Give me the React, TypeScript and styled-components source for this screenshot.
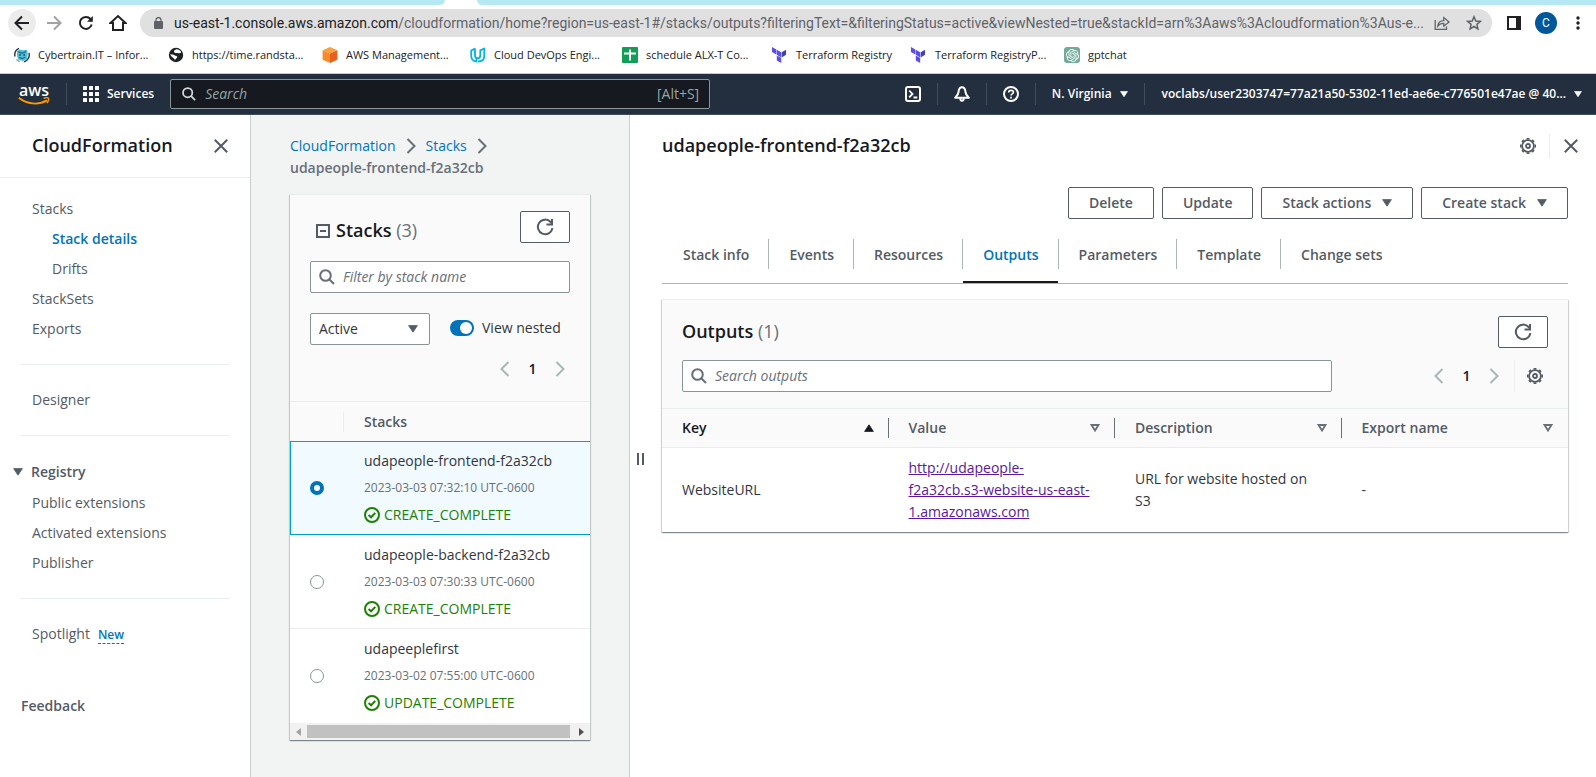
import React, { useState } from 'react';
import styled, { createGlobalStyle, css } from 'styled-components';
import { SiOpenai } from 'react-icons/si';

const c = {
  text: '#16191f',
  muted: '#545b64',
  soft: '#687078',
  line: '#eaeded',
  edge: '#c9cfcf',
  rule: '#aab7b8',
  field: '#879596',
  link: '#0073bb',
  ok: '#1d8102',
  nav: '#232f3e',
  head: '#fafafa',
};

const Global = createGlobalStyle`
  *, *::before, *::after { box-sizing: border-box; }
  body {
    margin: 0;
    background: #fff;
    color: ${c.text};
    font: 400 14px/22px "Open Sans", "Noto Sans", sans-serif;
  }
  button, input, select { font: inherit; color: inherit; }
  button { cursor: pointer; }
  a { text-decoration: none; }
  h1, h2, ul, ol { margin: 0; padding: 0; }
  ul, ol { list-style: none; }
  svg { display: block; flex: none; }
`;

const Page = styled.div`
  display: flex;
  flex-direction: column;
  min-height: 100vh;
`;

/* ---------- browser chrome ---------- */

const TabStrip = styled.div`
  display: flex;
  gap: 32px;
  height: 5px;
`;

const TabEdge = styled.div<{ $grow?: boolean }>`
  flex: ${(p) => (p.$grow ? '1 1 0' : '0 0 445px')};
  background: #b5e8f3;
  border-radius: ${(p) => (p.$grow ? '0 0 0 5px' : '0 0 5px 0')};
`;

const Toolbar = styled.div`
  display: flex;
  align-items: center;
  height: 36px;
  padding: 0 4px 0 8px;
`;

const ToolButtons = styled.div`
  display: flex;
  gap: 4px;
  margin-right: 8px;
`;

const ChromeButton = styled.button<{ $hover?: boolean }>`
  display: grid;
  place-items: center;
  width: 28px;
  height: 28px;
  padding: 0;
  border: 0;
  border-radius: 50%;
  background: ${(p) => (p.$hover ? '#ececec' : 'transparent')};
`;

const AddressBar = styled.div`
  display: flex;
  align-items: center;
  flex: 1;
  min-width: 0;
  height: 28px;
  padding: 0 4px 0 14px;
  border-radius: 14px;
  background: #e0e0e0;
`;

const Url = styled.div`
  flex: 1;
  min-width: 0;
  margin-left: 11px;
  overflow: hidden;
  white-space: nowrap;
  color: #5f6368;
  font: 400 14px/20px Roboto, sans-serif;
  b { font-weight: 400; color: #202124; }
`;

const AddressActions = styled.div`
  display: flex;
  gap: 4px;
`;

const ChromeMenu = styled.div`
  display: flex;
  align-items: center;
  gap: 7px;
  margin-left: 8px;
`;

const Avatar = styled.button`
  width: 22px;
  height: 22px;
  padding: 0;
  border: 0;
  border-radius: 50%;
  background: #01579b;
  color: #fff;
  font: 400 12px/22px Roboto, sans-serif;
`;

const Bookmarks = styled.nav`
  display: flex;
  align-items: center;
  height: 33px;
  padding: 0 14px 4px;
  border-bottom: 1px solid #c8cacd;
  font-size: 11px;
  line-height: 16px;
`;

const Bookmark = styled.a<{ $pitch: number }>`
  display: flex;
  align-items: center;
  gap: 8px;
  flex: 0 0 ${(p) => p.$pitch}px;
  color: #202124;
  white-space: nowrap;
`;

/* ---------- AWS navigation ---------- */

const AwsNav = styled.header`
  display: flex;
  align-items: center;
  height: 41px;
  padding: 0 14px 0 18px;
  border-bottom: 1px solid #414d5c;
  background: ${c.nav};
  color: #fff;
  font-size: 12px;
  font-weight: 600;
`;

const AwsLogo = styled.a`
  display: flex;
  flex-direction: column;
  align-items: center;
  width: 32px;
  color: #fff;
  font: 600 16px/13px "Open Sans", sans-serif;
`;

const NavRule = styled.i`
  width: 1px;
  height: 22px;
  background: #414d5c;
`;

const NavButton = styled.button<{ $pad?: string }>`
  display: flex;
  align-items: center;
  gap: 8px;
  padding: ${(p) => p.$pad ?? '0 16px'};
  border: 0;
  background: none;
  color: #fff;
  white-space: nowrap;
`;

const LogoCell = styled.div`
  display: flex;
  align-items: center;
  gap: 16px;
`;

const NavSearch = styled.label`
  display: flex;
  align-items: center;
  flex: 0 1 540px;
  gap: 9px;
  height: 30px;
  padding: 0 10px 0 11px;
  border: 1px solid ${c.field};
  border-radius: 2px;
  background: ${c.text};
  color: #95a5a6;
  font-size: 14px;
  font-weight: 400;
  svg { color: #d5dbdb; }
`;

const NavTools = styled.div`
  display: flex;
  align-items: center;
  margin-left: auto;
`;

const BareInput = styled.input<{ $tone?: string }>`
  flex: 1;
  min-width: 0;
  padding: 0;
  border: 0;
  outline: 0;
  background: transparent;
  &::placeholder {
    color: ${(p) => p.$tone ?? c.soft};
    font-style: italic;
    opacity: 1;
  }
`;

/* ---------- console layout ---------- */

const Console = styled.div`
  display: flex;
  flex: 1;
`;

const Sidebar = styled.aside`
  flex: 0 0 251px;
  border-right: 1px solid ${c.edge};
`;

const SidebarHeader = styled.div`
  display: flex;
  align-items: center;
  justify-content: space-between;
  height: 63px;
  padding: 0 19px 0 32px;
  border-bottom: 1px solid ${c.line};
`;

const Title = styled.h2`
  padding-bottom: 2px;
  font-size: 18px;
  line-height: 22px;
  font-weight: 600;
  span { color: ${c.soft}; font-weight: 400; }
`;

const IconButton = styled.button`
  display: grid;
  place-items: center;
  width: 20px;
  height: 24px;
  padding: 0;
  border: 0;
  background: none;
  color: ${c.muted};
`;

const SideNav = styled.nav`
  padding: 16px 20px 0;
`;

const SideGroup = styled.ul`
  & + & {
    margin-top: 20px;
    padding-top: 20px;
    border-top: 1px solid ${c.line};
  }
`;

const SideItem = styled.li<{ $nested?: boolean }>`
  padding: 4px 0 4px ${(p) => (p.$nested ? 32 : 12)}px;
`;

const SideLink = styled.a<{ $active?: boolean }>`
  color: ${(p) => (p.$active ? c.link : c.muted)};
  font-weight: ${(p) => (p.$active ? 600 : 400)};
`;

const SideToggle = styled.button`
  display: flex;
  align-items: center;
  gap: 8px;
  height: 32px;
  margin-left: -7px;
  padding: 0;
  border: 0;
  background: none;
  color: ${c.muted};
  font-weight: 600;
`;

const NewTag = styled.a`
  margin-left: 8px;
  border-bottom: 1px dashed ${c.link};
  color: ${c.link};
  font-size: 12px;
  line-height: 16px;
  font-weight: 600;
`;

const Feedback = styled.a`
  display: block;
  margin: 46px 0 20px 1px;
  color: ${c.muted};
  font-weight: 600;
`;

const StackColumn = styled.section`
  flex: 0 0 378px;
  padding: 20px 39px;
  background: #f2f3f3;
`;

const Crumbs = styled.ol`
  display: flex;
  flex-wrap: wrap;
  align-items: center;
  margin-bottom: 15px;
  color: ${c.soft};
  li { display: flex; align-items: center; }
  a { color: ${c.link}; }
  svg { margin: 0 10px; }
  strong { font-weight: 600; }
`;

const Panel = styled.section`
  border-top: 1px solid ${c.line};
  background: #fff;
  box-shadow:
    0 1px 1px 0 rgba(0, 28, 36, 0.3),
    1px 1px 1px 0 rgba(0, 28, 36, 0.15),
    -1px 1px 1px 0 rgba(0, 28, 36, 0.15);
`;

const PanelHeader = styled.div<{ $bottom: number }>`
  padding: 16px 20px ${(p) => p.$bottom}px;
  border-bottom: 1px solid ${c.line};
  background: ${c.head};
`;

const StackTitleRow = styled.div`
  display: flex;
  justify-content: space-between;
  height: 50px;
`;

const StackTitle = styled.div`
  display: flex;
  align-items: center;
  gap: 6px;
  height: 39px;
  padding-left: 6px;
`;

const Button = styled.button<{ $icon?: boolean }>`
  display: flex;
  align-items: center;
  justify-content: center;
  gap: 11px;
  height: 32px;
  padding: 0 ${(p) => (p.$icon ? 0 : 20)}px;
  ${(p) => p.$icon && css`width: 50px;`}
  border: 1px solid ${c.muted};
  border-radius: 2px;
  background: #fff;
  color: ${c.muted};
  font-weight: 600;
  white-space: nowrap;
`;

const SearchField = styled.label<{ $width?: string }>`
  display: flex;
  align-items: center;
  gap: 8px;
  width: ${(p) => p.$width ?? '100%'};
  height: 32px;
  padding: 0 8px;
  border: 1px solid ${c.field};
  border-radius: 2px;
  background: #fff;
  color: ${c.soft};
`;

const FilterRow = styled.div`
  display: flex;
  align-items: center;
  gap: 20px;
  margin-top: 20px;
`;

const SelectBox = styled.div`
  display: grid;
  align-items: center;
  width: 120px;
  height: 32px;
  border: 1px solid ${c.field};
  border-radius: 2px;
  background: #fff;
  color: ${c.muted};
  & > * { grid-area: 1 / 1; }
  svg { justify-self: end; margin-right: 11px; pointer-events: none; }
`;

const Select = styled.select`
  width: 100%;
  height: 30px;
  padding: 0 8px;
  border: 0;
  outline: 0;
  appearance: none;
  background: transparent;
  color: #31363e;
`;

const SwitchLabel = styled.label`
  display: flex;
  align-items: center;
  gap: 8px;
  padding-bottom: 2px;
  color: #31363e;
`;

const Switch = styled.input`
  display: flex;
  align-items: center;
  width: 24px;
  height: 16px;
  margin: 0;
  padding: 0 2px;
  border-radius: 8px;
  appearance: none;
  background: ${c.field};
  &::before {
    content: '';
    width: 12px;
    height: 12px;
    border-radius: 50%;
    background: #fff;
  }
  &:checked { justify-content: flex-end; background: ${c.link}; }
`;

const Pager = styled.div`
  display: flex;
  align-items: center;
  justify-content: flex-end;
  gap: 13px;
  ${IconButton} { color: ${c.rule}; }
  b { width: 9px; color: ${c.text}; font-weight: 600; text-align: center; }
`;

const PagerRow = styled.div`
  margin-top: 12px;
`;

const StackTable = styled.table`
  width: 100%;
  border-spacing: 0;
  text-align: left;
`;

const StackHead = styled.th<{ $slim?: boolean }>`
  height: 39px;
  padding: ${(p) => (p.$slim ? '0' : '0 0 0 20px')};
  background: ${c.head};
  color: ${c.muted};
  font-weight: 600;
  width: ${(p) => (p.$slim ? '54px' : 'auto')};
`;

const HeadRule = styled.i<{ $tone?: string }>`
  display: block;
  width: 1px;
  height: 20px;
  margin-left: auto;
  background: ${(p) => p.$tone ?? c.line};
`;

const StackCell = styled.td`
  padding: 8px 0 8px 20px;
  border-top: 1px solid transparent;
  border-bottom: 1px solid ${c.line};
`;

const StackRow = styled.tr<{ $selected: boolean }>`
  &:last-child ${StackCell} { border-bottom-color: transparent; }
  ${(p) =>
    p.$selected &&
    css`
      ${StackCell}, &:last-child ${StackCell} {
        border-color: #00a1c9;
        background: #f1faff;
      }
      ${StackCell}:first-child { border-left: 1px solid #00a1c9; padding-left: 19px; }
    `}
`;

const Radio = styled.input`
  display: block;
  width: 14px;
  height: 14px;
  margin: 0;
  border: 1px solid ${c.field};
  border-radius: 50%;
  appearance: none;
  background: #fff;
  &:checked { border: 4px solid ${c.link}; }
`;

const StackText = styled.label`
  display: grid;
  gap: 5px;
  color: #31363e;
  small { color: ${c.soft}; font-size: 12px; line-height: 22px; }
`;

const Status = styled.span`
  display: flex;
  align-items: center;
  gap: 4px;
  color: ${c.ok};
`;

const ScrollTrack = styled.div`
  display: flex;
  align-items: center;
  height: 17px;
  background: #f1f1f1;
`;

const ScrollArrow = styled.button<{ $on?: boolean }>`
  display: grid;
  place-items: center;
  width: 17px;
  height: 17px;
  padding: 0;
  border: 0;
  background: none;
  color: ${(p) => (p.$on ? '#505050' : '#a3a3a3')};
`;

const ScrollThumb = styled.div`
  flex: 1;
  height: 13px;
  margin-right: 3px;
  background: #c1c1c1;
`;

const Detail = styled.main`
  display: flex;
  flex: 1;
  min-width: 0;
  border-left: 1px solid ${c.edge};
`;

const Splitter = styled.div`
  display: flex;
  align-items: center;
  justify-content: flex-start;
  gap: 3px;
  flex: 0 0 32px;
  padding: 26px 0 0 7px;
  i { width: 2px; height: 12px; background: ${c.muted}; }
`;

const DetailBody = styled.div`
  flex: 1;
  min-width: 0;
  padding-right: 28px;
`;

const DetailHeader = styled.div`
  display: flex;
  align-items: center;
  justify-content: space-between;
  height: 62px;
  margin-right: -13px;
`;

const HeaderTools = styled.div`
  display: flex;
  align-items: center;
  gap: 11px;
`;

const ToolRule = styled.i<{ $tall?: boolean }>`
  width: 1px;
  height: ${(p) => (p.$tall ? 32 : 24)}px;
  background: ${c.line};
`;

const Actions = styled.div`
  display: flex;
  justify-content: flex-end;
  gap: 8px;
  margin-top: 10px;
`;

const Tabs = styled.div`
  display: flex;
  align-items: center;
  margin: 6px 0 15px;
  padding: 0 1px;
  border-bottom: 1px solid ${c.rule};
`;

const TabRule = styled.i`
  width: 1px;
  height: 30px;
  background: ${c.rule};
`;

const Tab = styled.button<{ $active: boolean }>`
  height: 58px;
  padding: 4px 19px 0 20px;
  border: 0;
  border-bottom: 2px solid ${(p) => (p.$active ? c.text : 'transparent')};
  background: none;
  color: ${(p) => (p.$active ? c.link : c.muted)};
  font-weight: 600;
  white-space: nowrap;
`;

const OutputsTitleRow = styled.div`
  display: flex;
  align-items: center;
  justify-content: space-between;
  margin-bottom: 12px;
`;

const OutputsTools = styled.div`
  display: flex;
  align-items: center;
  justify-content: space-between;
`;

const OutputsPager = styled.div`
  display: flex;
  align-items: center;
  gap: 10px;
  padding-right: 3px;
`;

const OutputTable = styled.table`
  width: 100%;
  table-layout: fixed;
  border-spacing: 0;
  text-align: left;
`;

const OutputHead = styled.th<{ $sorted?: boolean }>`
  height: 39px;
  padding: 0;
  border-bottom: 1px solid ${c.line};
  background: ${c.head};
  color: ${(p) => (p.$sorted ? c.text : c.muted)};
  font-weight: 600;
`;

const HeadInner = styled.div`
  display: flex;
  align-items: center;
  gap: 14px;
  padding-left: 20px;
  svg { margin-left: auto; }
  ${HeadRule} { margin-left: 0; }
`;

const OutputCell = styled.td`
  padding: 9px 20px;
  color: #31363e;
  a { color: #5a189a; text-decoration: underline; }
`;

/* ---------- icons ---------- */

const Search = ({ size = 16 }: { size?: number }) => (
  <svg width={size} height={size} viewBox="0 0 16 16" fill="none" stroke="currentColor" strokeWidth="2">
    <circle cx="6.5" cy="6.5" r="5.3" />
    <path d="M10.2 10.2L15 15" />
  </svg>
);

const Close = () => (
  <svg width="16" height="16" viewBox="0 0 16 16" fill="none" stroke="currentColor" strokeWidth="2">
    <path d="M1.8 1.8l12.4 12.4M14.2 1.8L1.8 14.2" />
  </svg>
);

const Chevron = ({ left, size = 16 }: { left?: boolean; size?: number }) => (
  <svg width="10" height={size} viewBox="0 0 10 16" fill="none" stroke="currentColor" strokeWidth="2">
    <path d={left ? 'M8.5 1L1.5 8l7 7' : 'M1.5 1l7 7-7 7'} />
  </svg>
);

const Caret = ({ size = 10, up }: { size?: number; up?: boolean }) => (
  <svg width={size} height={size * 0.8} viewBox="0 0 10 8" fill="currentColor" stroke="currentColor" strokeLinejoin="round">
    <path d={up ? 'M.6 7.4h8.8L5 .8z' : 'M.6.6h8.8L5 7.2z'} strokeWidth=".8" />
  </svg>
);

const SortMark = () => (
  <svg width="10" height="8" viewBox="0 0 10 8" fill="none" stroke={c.soft} strokeWidth="1.8">
    <path d="M1.5 1h7L5 6.6z" />
  </svg>
);

const Refresh = () => (
  <svg width="18" height="18" viewBox="0 0 18 18" fill="none" stroke="currentColor" strokeWidth="2">
    <path d="M16.4 10.2A7.3 7.3 0 1 1 14.6 4l1.6 2" />
    <path d="M16 1v5.5h-5.5" />
  </svg>
);

const Gear = () => (
  <svg width="16" height="16" viewBox="0 0 16 16" fill="none" stroke="currentColor">
    <circle cx="8" cy="8" r="5.9" strokeWidth="1.8" />
    {[0, 45, 90, 135, 180, 225, 270, 315].map((a) => (
      <path key={a} d="M6.6 .8h2.8" strokeWidth="1.6" transform={`rotate(${a} 8 8)`} />
    ))}
    <circle cx="8" cy="8" r="2" strokeWidth="1.8" />
  </svg>
);

const Check = () => (
  <svg width="16" height="16" viewBox="0 0 16 16" fill="none" stroke="currentColor" strokeWidth="2">
    <circle cx="8" cy="8" r="7" />
    <path d="M4.6 8l2.5 2.3 4.2-4.4" />
  </svg>
);

const Collapse = () => (
  <svg width="14" height="14" viewBox="0 0 14 14" fill="none" stroke={c.muted} strokeWidth="2">
    <path d="M1 1h12v12H1zM4 7h6" />
  </svg>
);

const Terraform = () => (
  <svg width="19" height="16" viewBox="-3 0 28.5 24">
    <path fill="#5c4ee5" d="M1.44 0v7.575l6.561 3.79V3.787zM8.72 4.23v7.575l6.561 3.787V8.018zm0 8.405v7.575L15.28 24v-7.578z" />
    <path fill="#4040b2" d="M22.56 4.227l-6.561 3.791v7.574l6.56-3.787z" />
  </svg>
);

const GptBadge = styled.span`
  display: grid;
  place-items: center;
  width: 16px;
  height: 16px;
  border-radius: 3px;
  background: #74aa9c;
  color: #fff;
`;

const bookmarks = [
  {
    text: 'Cybertrain.IT – Infor...', pitch: 154,
    icon: (
      <svg width="16" height="16" viewBox="0 0 16 16">
        <path d="M1 9.5A7.2 7.2 0 0 1 5 1.4M15 6a7.2 7.2 0 0 1-5 8.8" stroke="#20344f" strokeWidth="1.4" fill="none" />
        <path d="M3 4l3-1.4 3 .6 4-.5.8 4-.6 5L9.500 14l-5-1L3 9z" fill="#4fc0d9" />
        <path d="M4.400 4.600l3.400 1.800L12 4.600M5 10.400l3 1.200 3.400-1.400" stroke="#1f6c8a" strokeWidth="1.2" fill="none" />
        <path d="M5.200 8h1.600M9.400 8H11" stroke="#16435c" strokeWidth="1.4" />
        <path d="M2.400 12.400l3.200 2.400" stroke="#8b95a1" strokeWidth="1.2" />
      </svg>
    ),
  },
  {
    text: 'https://time.randsta...', pitch: 154,
    icon: (
      <svg width="16" height="16" viewBox="0 0 16 16">
        <circle cx="8" cy="8" r="7.2" fill="#202124" />
        <path d="M2.200 7c1.600.9 3.200.3 4.400 1.300.9.8 2.400.4 2.600 1.500.2 1-1 1.300-1.400 2.200-.3.800-1.400.8-1.600 0C5.600 10.200 2.800 10 2.200 7zM8.600 2.200c-1.800.5-3 1.500-2.500 2.800.5 1.200 2 1 3.200.9.9-.1 1.800.4 2.800.2.700-.1 1-.6.900-1.300C12.300 3.400 10.600 2.200 8.600 2.200z" fill="#fff" />
      </svg>
    ),
  },
  {
    text: 'AWS Management...', pitch: 148,
    icon: (
      <svg width="16" height="16" viewBox="0 0 16 16">
        <path d="M8 0l7.400 3.200L8 6.600.6 3.200z" fill="#f9a03f" />
        <path d="M.6 3.200L8 6.600V16L.6 12.800z" fill="#f68b2c" />
        <path d="M15.400 3.200L8 6.600V16l7.400-3.200z" fill="#e8601c" />
      </svg>
    ),
  },
  {
    text: 'Cloud DevOps Engi...', pitch: 152,
    icon: (
      <svg width="16" height="16" viewBox="0 0 16 16" fill="none" stroke="#02b3e4" strokeWidth="1.8" strokeLinejoin="round">
        <path d="M5 1.600L1.200 3.500v5.300c0 3.500 2.400 5.500 5.300 5.700V10" />
        <path d="M5 1.600v6.600c0 2.200 1 3.200 2.600 3.200 1.700 0 2.700-1 2.700-3.200V3.400l4-1.900v6.900c0 4-2.700 6.100-6.300 6.100" />
      </svg>
    ),
  },
  {
    text: 'schedule ALX-T Co...', pitch: 147,
    icon: (
      <svg width="16" height="16" viewBox="0 0 16 16">
        <rect width="16" height="16" rx="1" fill="#0f9d58" />
        <path d="M7 2.500h2v3h5v2H9v6H7v-6H2v-2h5z" fill="#fff" />
      </svg>
    ),
  },
  { text: 'Terraform Registry', pitch: 139, icon: <Terraform /> },
  { text: 'Terraform RegistryP...', pitch: 156, icon: <Terraform /> },
  { text: 'gptchat', pitch: 80, icon: <GptBadge><SiOpenai size={13} /></GptBadge> },
];

const stacks = [
  { name: 'udapeople-frontend-f2a32cb', date: '2023-03-03 07:32:10 UTC-0600', status: 'CREATE_COMPLETE' },
  { name: 'udapeople-backend-f2a32cb', date: '2023-03-03 07:30:33 UTC-0600', status: 'CREATE_COMPLETE' },
  { name: 'udapeeplefirst', date: '2023-03-02 07:55:00 UTC-0600', status: 'UPDATE_COMPLETE' },
];

const tabs = ['Stack info', 'Events', 'Resources', 'Outputs', 'Parameters', 'Template', 'Change sets'];

function BrowserChrome() {
  return (
    <>
      <TabStrip><TabEdge /><TabEdge $grow /></TabStrip>
      <Toolbar>
        <ToolButtons>
          <ChromeButton $hover aria-label="Back">
            <svg width="16" height="16" viewBox="0 0 16 16" fill="none" stroke="#202124" strokeWidth="2"><path d="M15 8H2M8 1.500L1.500 8 8 14.500" /></svg>
          </ChromeButton>
          <ChromeButton aria-label="Forward">
            <svg width="16" height="16" viewBox="0 0 16 16" fill="none" stroke="#a0a2a5" strokeWidth="2"><path d="M1 8h13M8 1.500L14.500 8 8 14.500" /></svg>
          </ChromeButton>
          <ChromeButton aria-label="Reload">
            <svg width="16" height="16" viewBox="0 0 16 16" fill="none" stroke="#202124" strokeWidth="2"><path d="M13.700 9.500A6 6 0 1 1 12.500 4" /><path d="M14.800 1v5.800H9z" fill="#202124" stroke="none" /></svg>
          </ChromeButton>
          <ChromeButton aria-label="Home">
            <svg width="18" height="18" viewBox="0 0 18 18" fill="none" stroke="#202124" strokeWidth="2"><path d="M1.500 9L9 2l7.500 7H14v7H4V9z" /></svg>
          </ChromeButton>
        </ToolButtons>
        <AddressBar>
          <svg width="9" height="12" viewBox="0 0 9 12"><rect y="4" width="9" height="8" rx="1" fill="#5f6368" /><path d="M2 5V3a2.500 2.500 0 0 1 5 0v2" fill="none" stroke="#5f6368" strokeWidth="1.300" /></svg>
          <Url><b>us-east-1.console.aws.amazon.com</b>/cloudformation/home?region=us-east-1#/stacks/outputs?filteringText=&amp;filteringStatus=active&amp;viewNested=true&amp;stackId=arn%3Aaws%3Acloudformation%3Aus-e...</Url>
          <AddressActions>
            <ChromeButton aria-label="Share">
              <svg width="16" height="16" viewBox="0 0 16 16" fill="none" stroke="#5f6368" strokeWidth="1.300"><path d="M1.200 5v9.300h11.300v-2.800" /><path d="M3.800 11c.4-3.400 2.600-5.200 6-5.300V2.600L15 7l-5.200 4.200V8.300C7.200 8.300 5.400 9 3.800 11z" /></svg>
            </ChromeButton>
            <ChromeButton aria-label="Bookmark">
              <svg width="16" height="16" viewBox="0 0 16 16" fill="none" stroke="#5f6368" strokeWidth="1.500"><path d="M8 1.800l1.800 4.200 4.600.4-3.500 3 1 4.500L8 11.500l-3.900 2.400 1-4.500-3.500-3 4.600-.4z" /></svg>
            </ChromeButton>
          </AddressActions>
        </AddressBar>
        <ChromeMenu>
          <ChromeButton aria-label="Side panel">
            <svg width="14" height="14" viewBox="0 0 14 14" fill="#202124"><path d="M0 0h14v14H0zM2 2v10h7V2z" fillRule="evenodd" /></svg>
          </ChromeButton>
          <Avatar>C</Avatar>
          <ChromeButton aria-label="Menu">
            <svg width="4" height="14" viewBox="0 0 4 14" fill="#202124"><circle cx="2" cy="2" r="1.700" /><circle cx="2" cy="7" r="1.700" /><circle cx="2" cy="12" r="1.700" /></svg>
          </ChromeButton>
        </ChromeMenu>
      </Toolbar>
      <Bookmarks>
        {bookmarks.map((b) => (
          <Bookmark href="#" key={b.text} $pitch={b.pitch}>{b.icon}{b.text}</Bookmark>
        ))}
      </Bookmarks>
    </>
  );
}

function ConsoleNav() {
  return (
    <AwsNav>
      <LogoCell>
        <AwsLogo href="#">
          aws
          <svg width="32" height="8" viewBox="0 0 32 8" fill="none" stroke="#ff9900" strokeWidth="1.800">
            <path d="M.8.8C9 7.500 20.500 8.300 29 3.400" />
            <path d="M25.500 1.400c2-.8 4-.9 4.900-.2.500 1-.1 3-1.400 5" strokeWidth="1.400" />
          </svg>
        </AwsLogo>
        <NavRule />
      </LogoCell>
      <NavButton>
        <svg width="16" height="16" viewBox="0 0 16 16" fill="#fff">
          {[0, 6, 12].flatMap((x) => [0, 6, 12].map((y) => <rect key={`${x}-${y}`} x={x} y={y} width="4" height="4" rx=".5" />))}
        </svg>
        Services
      </NavButton>
      <NavSearch>
        <Search size={14} />
        <BareInput placeholder="Search" $tone="#95a5a6" aria-label="Search" />
        [Alt+S]
      </NavSearch>
      <NavTools>
        <NavButton aria-label="CloudShell">
          <svg width="16" height="16" viewBox="0 0 16 16" fill="none" stroke="#fff" strokeWidth="2"><rect x="1" y="1" width="14" height="14" rx="2" /><path d="M4.200 4.500L7.500 8l-3.300 3.300M8.500 11.500h3.800" strokeWidth="1.800" /></svg>
        </NavButton>
        <NavRule />
        <NavButton aria-label="Notifications">
          <svg width="16" height="16" viewBox="0 0 16 16" fill="none" stroke="#fff" strokeWidth="2" strokeLinejoin="round"><path d="M8 1.300c2.500 0 3.300 2.300 3.500 4.800.2 2.200 1.200 3.600 3.300 5.600H1.200c2.100-2 3.100-3.400 3.300-5.600C4.700 3.600 5.500 1.300 8 1.300z" /><path d="M6.200 12.200c.1 1.800.8 2.600 1.800 2.600s1.700-.8 1.800-2.600" /></svg>
        </NavButton>
        <NavRule />
        <NavButton aria-label="Help">
          <svg width="16" height="16" viewBox="0 0 16 16" fill="none" stroke="#fff" strokeWidth="2"><circle cx="8" cy="8" r="7" /><path d="M5.700 6.500C5.700 5 6.700 4.300 8 4.300s2.400.8 2.400 2C10.400 8 8 7.800 8 9.600M8 10.800v1.800" strokeWidth="1.700" /></svg>
        </NavButton>
        <NavRule />
        <NavButton>N. Virginia <Caret size={8} /></NavButton>
        <NavRule />
        <NavButton $pad="0 0 0 17px">voclabs/user2303747=77a21a50-5302-11ed-ae6e-c776501e47ae @ 40...<Caret size={8} /></NavButton>
      </NavTools>
    </AwsNav>
  );
}

function SideNavigation() {
  return (
    <Sidebar>
      <SidebarHeader>
        <Title>CloudFormation</Title>
        <IconButton aria-label="Close navigation"><Close /></IconButton>
      </SidebarHeader>
      <SideNav>
        <SideGroup>
          <SideItem><SideLink href="#">Stacks</SideLink></SideItem>
          <SideItem $nested><SideLink href="#" $active>Stack details</SideLink></SideItem>
          <SideItem $nested><SideLink href="#">Drifts</SideLink></SideItem>
          <SideItem><SideLink href="#">StackSets</SideLink></SideItem>
          <SideItem><SideLink href="#">Exports</SideLink></SideItem>
        </SideGroup>
        <SideGroup>
          <SideItem><SideLink href="#">Designer</SideLink></SideItem>
        </SideGroup>
        <SideGroup>
          <li><SideToggle><Caret />Registry</SideToggle></li>
          <SideItem><SideLink href="#">Public extensions</SideLink></SideItem>
          <SideItem><SideLink href="#">Activated extensions</SideLink></SideItem>
          <SideItem><SideLink href="#">Publisher</SideLink></SideItem>
        </SideGroup>
        <SideGroup>
          <SideItem><SideLink href="#">Spotlight</SideLink><NewTag href="#">New</NewTag></SideItem>
        </SideGroup>
        <Feedback href="#">Feedback</Feedback>
      </SideNav>
    </Sidebar>
  );
}

function StackList() {
  const [selected, setSelected] = useState(0);
  const [nested, setNested] = useState(true);
  return (
    <StackColumn>
      <Crumbs>
        <li><a href="#">CloudFormation</a><Chevron /></li>
        <li><a href="#">Stacks</a><Chevron /></li>
        <li><strong>udapeople-frontend-f2a32cb</strong></li>
      </Crumbs>
      <Panel>
        <PanelHeader $bottom={20}>
          <StackTitleRow>
            <StackTitle><Collapse /><Title>Stacks <span>(3)</span></Title></StackTitle>
            <Button $icon aria-label="Refresh stacks"><Refresh /></Button>
          </StackTitleRow>
          <SearchField><Search /><BareInput placeholder="Filter by stack name" aria-label="Filter by stack name" /></SearchField>
          <FilterRow>
            <SelectBox>
              <Select aria-label="Filter status"><option>Active</option><option>Deleted</option></Select>
              <Caret />
            </SelectBox>
            <SwitchLabel>
              <Switch type="checkbox" checked={nested} onChange={(e) => setNested(e.target.checked)} />
              View nested
            </SwitchLabel>
          </FilterRow>
          <PagerRow>
            <Pager>
              <IconButton aria-label="Previous page"><Chevron left /></IconButton>
              <b>1</b>
              <IconButton aria-label="Next page"><Chevron /></IconButton>
            </Pager>
          </PagerRow>
        </PanelHeader>
        <StackTable>
          <thead>
            <tr><StackHead $slim><HeadRule /></StackHead><StackHead>Stacks</StackHead></tr>
          </thead>
          <tbody>
            {stacks.map((s, i) => (
              <StackRow key={s.name} $selected={i === selected}>
                <StackCell>
                  <Radio type="radio" name="stack" id={`stack-${i}`} checked={i === selected} onChange={() => setSelected(i)} />
                </StackCell>
                <StackCell>
                  <StackText htmlFor={`stack-${i}`}>
                    <span>{s.name}</span>
                    <small>{s.date}</small>
                    <Status><Check />{s.status}</Status>
                  </StackText>
                </StackCell>
              </StackRow>
            ))}
          </tbody>
        </StackTable>
        <ScrollTrack>
          <ScrollArrow aria-label="Scroll left"><svg width="5" height="8" viewBox="0 0 5 8" fill="currentColor"><path d="M5 0v8L0 4z" /></svg></ScrollArrow>
          <ScrollThumb />
          <ScrollArrow $on aria-label="Scroll right"><svg width="5" height="8" viewBox="0 0 5 8" fill="currentColor"><path d="M0 0v8l5-4z" /></svg></ScrollArrow>
        </ScrollTrack>
      </Panel>
    </StackColumn>
  );
}

function StackDetail() {
  const [active, setActive] = useState('Outputs');
  return (
    <Detail>
      <Splitter><i /><i /></Splitter>
      <DetailBody>
        <DetailHeader>
          <Title as="h1">udapeople-frontend-f2a32cb</Title>
          <HeaderTools>
            <IconButton aria-label="Preferences"><Gear /></IconButton>
            <ToolRule />
            <IconButton aria-label="Close"><Close /></IconButton>
          </HeaderTools>
        </DetailHeader>
        <Actions>
          <Button>Delete</Button>
          <Button>Update</Button>
          <Button>Stack actions <Caret /></Button>
          <Button>Create stack <Caret /></Button>
        </Actions>
        <Tabs>
          {tabs.map((t, i) => (
            <React.Fragment key={t}>
              {i > 0 && <TabRule />}
              <Tab $active={t === active} onClick={() => setActive(t)}>{t}</Tab>
            </React.Fragment>
          ))}
        </Tabs>
        <Panel>
          <PanelHeader $bottom={16}>
            <OutputsTitleRow>
              <Title>Outputs <span>(1)</span></Title>
              <Button $icon aria-label="Refresh outputs"><Refresh /></Button>
            </OutputsTitleRow>
            <OutputsTools>
              <SearchField $width="75%"><Search /><BareInput placeholder="Search outputs" aria-label="Search outputs" /></SearchField>
              <OutputsPager>
                <Pager>
                  <IconButton aria-label="Previous page"><Chevron left /></IconButton>
                  <b>1</b>
                  <IconButton aria-label="Next page"><Chevron /></IconButton>
                </Pager>
                <ToolRule $tall />
                <IconButton aria-label="Table preferences"><Gear /></IconButton>
              </OutputsPager>
            </OutputsTools>
          </PanelHeader>
          <OutputTable>
            <thead>
              <tr>
                <OutputHead $sorted><HeadInner>Key<Caret up /><HeadRule $tone={c.soft} /></HeadInner></OutputHead>
                <OutputHead><HeadInner>Value<SortMark /><HeadRule $tone={c.soft} /></HeadInner></OutputHead>
                <OutputHead><HeadInner>Description<SortMark /><HeadRule $tone={c.soft} /></HeadInner></OutputHead>
                <OutputHead><HeadInner>Export name<SortMark /><HeadRule $tone="transparent" /></HeadInner></OutputHead>
              </tr>
            </thead>
            <tbody>
              <tr>
                <OutputCell>WebsiteURL</OutputCell>
                <OutputCell><a href="#">http://udapeople-<br />f2a32cb.s3-website-us-east-<br />1.amazonaws.com</a></OutputCell>
                <OutputCell>URL for website hosted on S3</OutputCell>
                <OutputCell>-</OutputCell>
              </tr>
            </tbody>
          </OutputTable>
        </Panel>
      </DetailBody>
    </Detail>
  );
}

export default function App() {
  return (
    <Page>
      <Global />
      <BrowserChrome />
      <ConsoleNav />
      <Console>
        <SideNavigation />
        <StackList />
        <StackDetail />
      </Console>
    </Page>
  );
}
